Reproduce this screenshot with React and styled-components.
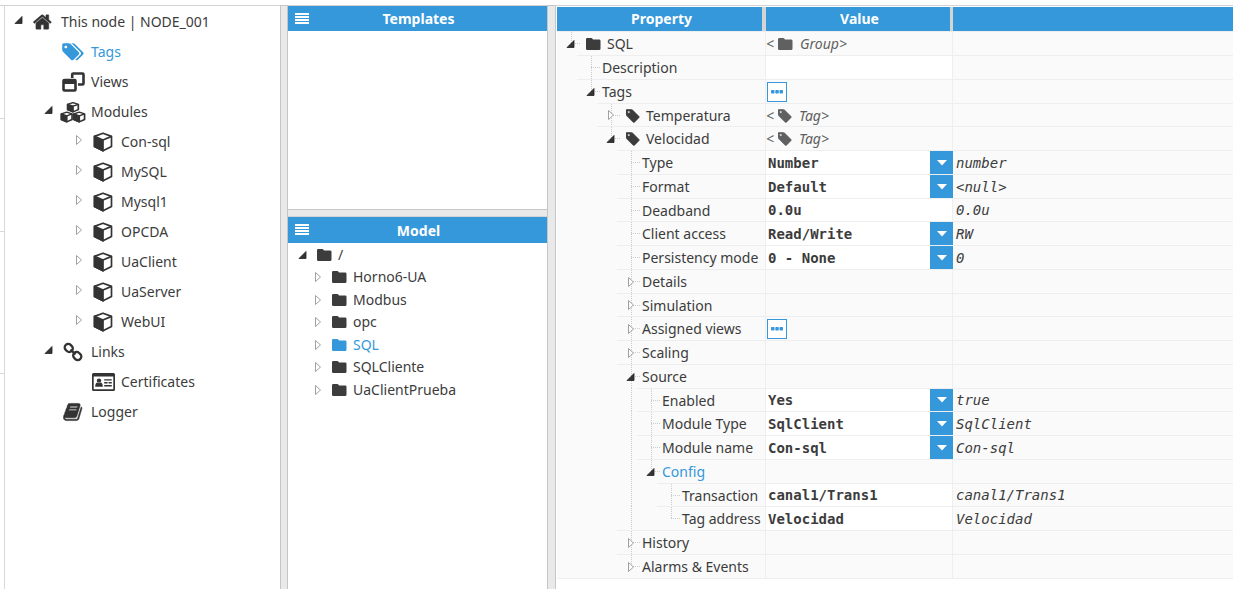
import React from "react";
import styled, { createGlobalStyle, css } from "styled-components";

const BLUE = "#3598db";
const ICON = "#333333";
const INK = "#3c3c3c";
const LINE = "#eeeeee";
const UI = `"Noto Sans", "Open Sans", sans-serif`;
const MONO = `"DejaVu Sans Mono", "Liberation Mono", monospace`;

const GlobalStyle = createGlobalStyle`
  *, *::before, *::after { box-sizing: border-box; }
  body {
    margin: 0;
    background: #ffffff;
    color: ${INK};
    font: 14px/20px ${UI};
  }
  button, input, select { font: inherit; color: inherit; }
`;

/* ---------- page frame ---------- */

const Workspace = styled.div`
  min-height: 100vh;
  padding-top: 5px;
  display: flex;
`;

const Panel = styled.div`
  border-top: 1px solid #d2d2d2;
  min-width: 0;
`;

const Strip = styled(Panel)`
  flex: none;
  width: 5px;
  border-right: 1px solid #d8d8d8;
`;

const StripPart = styled.div`
  height: ${(p) => p.$h}px;
  border-bottom: 1px solid #d8d8d8;
`;

const NavPanel = styled(Panel)`
  flex: none;
  width: 275px;
  padding-top: 1px;
`;

const MiddlePanel = styled(Panel)`
  flex: none;
  width: 259px;
  display: flex;
  flex-direction: column;
`;

const PropertyPanel = styled(Panel)`
  flex: 1;
  padding: 1px 0 0 1px;
`;

const Splitter = styled.div`
  flex: none;
  background: #e9e9e9;
  ${(p) =>
    p.$horizontal
      ? css`
          height: 8px;
          border-top: 1px solid #c6c6c6;
          border-bottom: 1px solid #d4d4d4;
        `
      : css`
          width: ${p.$w}px;
          border: solid #c6c6c6;
          border-width: 1px 1px 0;
        `}
`;

const PaneHeader = styled.header`
  display: grid;
  grid-template-columns: 28px 1fr 26px;
  align-items: center;
  height: ${(p) => p.$h}px;
  background: ${BLUE};
  color: #ffffff;
`;

const PaneTitle = styled.h2`
  margin: 0;
  padding-top: 1px;
  text-align: center;
  font-size: 14px;
  line-height: 20px;
  font-weight: 700;
`;

const MenuButton = styled.button`
  display: flex;
  justify-content: center;
  padding: 0;
  border: 0;
  background: none;
`;

const TemplatesBody = styled.div`
  height: 178px;
`;

/* ---------- icons ---------- */

const Svg = styled.svg`
  display: block;
  flex: none;
`;

const FA = {
  home: "M1472 992v480q0 26-19 45t-45 19h-384v-384h-256v384h-384q-26 0-45-19t-19-45v-480q0-1 .5-3t.5-3l575-474 575 474q1 2 1 6zm223-69l-62 74q-8 9-21 11h-3q-13 0-21-7l-692-577-692 577q-12 8-24 7-13-2-21-11l-62-74q-8-10-7-23.500t11-21.500l719-599q32-26 76-26t76 26l244 204v-195q0-14 9-23t23-9h192q14 0 23 9t9 23v408l219 182q10 8 11 21.500t-7 23.500z",
  tag: "M448 448q0-53-37.500-90.500t-90.500-37.500-90.500 37.500-37.500 90.500 37.500 90.500 90.500 37.500 90.500-37.500 37.500-90.500zm1067 576q0 53-37 90l-491 492q-39 37-91 37-53 0-90-37l-715-716q-38-37-64.500-101t-26.500-117v-416q0-52 38-90t90-38h416q53 0 117 26.500t102 64.500l715 714q37 39 37 91z",
  tagBack:
    "M1899 1024q0 53-37 90l-491 492q-39 37-91 37-36 0-59-14t-53-45l470-470q37-37 37-90 0-52-37-91l-715-714q-38-38-102-64.500t-117-26.500h224q53 0 117 26.500t102 64.500l715 714q37 39 37 91z",
  book: "M1703 478q40 57 18 129l-275 906q-19 64-76.500 107.500t-122.500 43.500h-923q-77 0-148.500-53.500t-99.500-131.500q-24-67-2-127 0-4 3-27t4-37q1-8-3-21.500t-3-19.500q2-11 8-21t16.500-23.500 16.500-23.500q23-38 45-91.500t30-91.500q3-10 .5-30t-.5-28q3-11 17-28t17-23q21-36 42-92t25-90q1-9-2.500-32t.5-28q4-13 22-30.500t22-22.500q19-26 42.500-84.500t27.500-96.500q1-8-3-25.500t-2-26.500q2-8 9-18t18-23 17-21q8-12 16.500-30.500t15-35 16-36 19.500-32 26.500-23.500 36-11.500 47.500 5.500l-1 3q38-9 51-9h761q74 0 114 56t18 130l-274 906q-36 119-71.500 153.500t-128.500 34.500h-869q-27 0-38 15-11 16-1 43 24 70 144 70h923q29 0 56-15.500t35-41.500l300-987q7-22 5-57 38 15 59 43zm-1064 2q-4 13 2 22.500t20 9.500h608q13 0 25.500-9.500t16.500-22.500l21-64q4-13-2-22.500t-20-9.500h-608q-13 0-25.500 9.500t-16.500 22.500zm-83 256q-4 13 2 22.500t20 9.500h608q13 0 25.500-9.500t16.500-22.500l21-64q4-13-2-22.500t-20-9.500h-608q-13 0-25.500 9.500t-16.500 22.500z",
};

const HomeIcon = () => (
  <Svg width="20" height="20" viewBox="60 0 1792 1792" fill="currentColor" aria-hidden="true">
    <path d={FA.home} stroke="currentColor" strokeWidth="40" />
  </Svg>
);

const TagsIcon = () => (
  <Svg width="22" height="18" viewBox="0 100 1920 1600" fill="currentColor" aria-hidden="true">
    <path d={FA.tag} />
    <path d={FA.tagBack} />
  </Svg>
);

const TagIcon = () => (
  <Svg width="14" height="14" viewBox="0 100 1600 1600" fill="currentColor" aria-hidden="true">
    <path d={FA.tag} stroke="currentColor" strokeWidth="50" />
  </Svg>
);

const BookIcon = () => (
  <Svg width="20" height="20" viewBox="30 0 1792 1792" fill="currentColor" aria-hidden="true">
    <path d={FA.book} stroke="currentColor" strokeWidth="50" />
  </Svg>
);

const FolderIcon = () => (
  <Svg width="15" height="12" viewBox="0 0 15 12" fill="currentColor" aria-hidden="true">
    <path d="M0 1.200Q0 0 1.200 0H5.200q.9 0 1.300.7l.5.8h6.200q1.300 0 1.300 1.300v7.700Q14.500 12 13.200 12H1.200Q0 12 0 10.700z" />
  </Svg>
);

const ViewsIcon = () => (
  <Svg width="23" height="20" viewBox="0 0 23 20" fill="none" stroke="currentColor" strokeWidth="2.600" aria-hidden="true">
    <path d="M10.200 6V2.500Q10.200 1.500 11.200 1.500h9.300Q21.500 1.500 21.500 2.500v9Q21.500 12.500 20.500 12.500H16" />
    <rect x="1.500" y="8" width="12" height="10.500" rx="1" />
    <path d="M1 9.700h13" strokeWidth="4.600" />
  </Svg>
);

const CubeShape = () => (
  <>
    <path d="M10 1.200 18.500 4.400V14.500L10 18.800 1.500 14.500V4.400z" />
    <path d="M1.500 4.400 10 8V18.800L1.500 14.500z" fill="currentColor" />
    <path d="M10 8 18.500 4.400" />
  </>
);

const CubeIcon = () => (
  <Svg width="20" height="20" viewBox="0 0 20 20" fill="none" stroke="currentColor" strokeWidth="1.700" strokeLinejoin="round" aria-hidden="true">
    <CubeShape />
  </Svg>
);

const CubesIcon = () => (
  <Svg width="26" height="21" viewBox="0 0 52 42" fill="none" stroke="currentColor" strokeWidth="2.700" strokeLinejoin="round" aria-hidden="true">
    <g transform="translate(13.500 0) scale(1.250 1.050)"><CubeShape /></g>
    <g transform="translate(1 19) scale(1.250 1.100)"><CubeShape /></g>
    <g transform="translate(26 19) scale(1.250 1.100)"><CubeShape /></g>
  </Svg>
);

const LinksIcon = () => (
  <Svg width="20" height="20" viewBox="0 0 20 20" fill="none" stroke="currentColor" strokeWidth="2.300" aria-hidden="true">
    <rect x="1.500" y="2.500" width="8.500" height="7" rx="3.400" transform="rotate(45 5.800 6)" />
    <rect x="10" y="10.500" width="8.500" height="7" rx="3.400" transform="rotate(45 14.200 14)" />
    <path d="M7.500 7.500 12.500 12.500" />
  </Svg>
);

const CardIcon = () => (
  <Svg width="23" height="18" viewBox="0 0 23 18" fill="currentColor" aria-hidden="true">
    <path fillRule="evenodd" d="M1.500 0h20Q23 0 23 1.500v15q0 1.500-1.500 1.500h-20Q0 18 0 16.500v-15Q0 0 1.500 0zM1.700 3.500v12.800h19.600v-12.800z" />
    <circle cx="7" cy="7.600" r="2.200" />
    <path d="M3.200 13.700q0-3.900 2.300-4.100 1.500 1.100 3 0 2.300.2 2.300 4.100z" />
    <path d="M12.200 6.200h7.600v1.400h-7.600zM12.200 9h3.400v1.400h-3.400zM16.600 9h3.200v1.400h-3.200zM12.200 12h7.600v1.400h-7.600z" />
  </Svg>
);

const MenuIcon = () => (
  <Svg width="14" height="12" viewBox="0 0 14 12" fill="currentColor" aria-hidden="true">
    <path d="M0 0h14v2H0zM0 3h14v2H0zM0 6h14v2H0zM0 9h14v2H0z" />
  </Svg>
);

const DotsIcon = () => (
  <Svg width="12" height="4" viewBox="0 0 12 4" fill="currentColor" aria-hidden="true">
    <rect x="0" y="0" width="3.500" height="3.500" rx=".8" />
    <rect x="4.300" y="0" width="3.500" height="3.500" rx=".8" />
    <rect x="8.500" y="0" width="3.500" height="3.500" rx=".8" />
  </Svg>
);

const ExpanderButton = styled.button`
  display: flex;
  justify-content: center;
  align-items: center;
  flex: none;
  width: 12px;
  height: 12px;
  padding: 0;
  border: 0;
  background: none;
`;

function Expander({ open, name }) {
  return (
    <ExpanderButton type="button" aria-expanded={open} aria-label={name}>
      <Svg width="10" height="12" viewBox="0 0 10 12" aria-hidden="true">
        {open ? (
          <path d="M8 2.500V9.500H1z" fill="#333333" stroke="#222222" strokeWidth=".8" />
        ) : (
          <path d="M2.500 1.500 7.500 6 2.500 10.500z" fill="#ffffff" stroke="#a0a0a0" />
        )}
      </Svg>
    </ExpanderButton>
  );
}

/* ---------- trees ---------- */

const TreeList = styled.ul`
  margin: 0;
  padding: 0;
  list-style: none;
`;

const TreeLink = styled.a`
  display: flex;
  align-items: center;
  color: ${(p) => (p.$active ? BLUE : INK)};
  text-decoration: none;
  white-space: nowrap;
`;

const NavRow = styled.li`
  display: flex;
  align-items: center;
  height: 30px;
  padding-left: ${(p) => 8 + p.$level * 30}px;
`;

const NavToggle = styled.span`
  display: block;
  width: 17px;
  height: 16px;
`;

const NavIcon = styled.span`
  display: flex;
  justify-content: center;
  width: 26px;
  margin-right: 5px;
  color: ${(p) => (p.$active ? BLUE : ICON)};
`;

const ModelRow = styled.li`
  display: flex;
  align-items: center;
  height: 22px;
  padding-left: ${(p) => 9 + p.$level * 15}px;
  &:nth-child(odd) {
    height: 23px;
  }
`;

const ModelIcon = styled.span`
  margin: 0 6px 0 8px;
`;

const NAV = [
  [0, "This node | NODE_001", HomeIcon, true],
  [1, "Tags", TagsIcon, null, true],
  [1, "Views", ViewsIcon],
  [1, "Modules", CubesIcon, true],
  [2, "Con-sql", CubeIcon, false],
  [2, "MySQL", CubeIcon, false],
  [2, "Mysql1", CubeIcon, false],
  [2, "OPCDA", CubeIcon, false],
  [2, "UaClient", CubeIcon, false],
  [2, "UaServer", CubeIcon, false],
  [2, "WebUI", CubeIcon, false],
  [1, "Links", LinksIcon, true],
  [2, "Certificates", CardIcon],
  [1, "Logger", BookIcon],
];

const MODEL = [
  [0, "/", true],
  [1, "Horno6-UA", false],
  [1, "Modbus", false],
  [1, "opc", false],
  [1, "SQL", false, true],
  [1, "SQLCliente", false],
  [1, "UaClientPrueba", false],
];

/* ---------- property table ---------- */

const Table = styled.table`
  width: 100%;
  table-layout: fixed;
  border-collapse: separate;
  border-spacing: 0;
  background: #fafafa;
  border-bottom: 1px solid ${LINE};
`;

const HeadCell = styled.th`
  height: 24px;
  padding: 0;
  background: linear-gradient(
    to left,
    #d4d4d4 ${(p) => p.$gap || 0}px,
    ${BLUE} ${(p) => p.$gap || 0}px
  );
  color: #ffffff;
  font-weight: 700;
  line-height: 20px;
`;

const Row = styled.tr`
  height: 24px;
  &:nth-child(4n) {
    height: 23px;
  }
`;

const NameCell = styled.th`
  height: inherit;
  padding: 0;
  border-right: 1px solid ${LINE};
  font-weight: 400;
  text-align: left;
`;

const NameLine = styled.div`
  display: flex;
  height: 100%;
`;

const Guide = styled.span`
  flex: none;
  width: 20px;
  ${(p) =>
    p.$on &&
    css`
      background: repeating-linear-gradient(#cccccc 0 1px, transparent 1px 2px) 14px 0 / 1px 100% no-repeat;
    `}
`;

const Branch = styled.span`
  flex: none;
  display: flex;
  align-items: center;
  width: 25px;
  padding-left: 8px;
  border-top: 1px solid ${LINE};
  background:
    repeating-linear-gradient(#cccccc 0 1px, transparent 1px 2px) 14px 0 / 1px ${(p) => (p.$last ? "50%" : "100%")} no-repeat,
    repeating-linear-gradient(90deg, #cccccc 0 1px, transparent 1px 2px) 14px 50% / 9px 1px no-repeat;
`;

const Name = styled.span`
  flex: 1;
  display: flex;
  align-items: center;
  gap: ${(p) => (p.$icon ? 6 : 0)}px;
  padding: 1px 0 0 ${(p) => (p.$icon ? 4 : 0)}px;
  border-top: 1px solid ${LINE};
  color: ${(p) => (p.$active ? BLUE : INK)};
  line-height: 20px;
  white-space: nowrap;
`;

const ValueCell = styled.td`
  height: inherit;
  padding: 0;
  border-top: 1px solid ${LINE};
  border-right: ${(p) => (p.$flush ? 0 : 1)}px solid ${LINE};
  background: ${(p) => (p.$editable ? "#ffffff" : "transparent")};
`;

const RawCell = styled.td`
  padding: 0 3px;
  border-top: 1px solid ${LINE};
  font: italic 14px/20px ${MONO};
  white-space: nowrap;
`;

const Kind = styled.span`
  display: flex;
  align-items: center;
  gap: 4px;
  padding-top: 1px;
  color: #606060;
  font-style: italic;
  line-height: 20px;
`;

const KindName = styled.span`
  padding-left: 3px;
`;

const TextInput = styled.input`
  display: block;
  width: 100%;
  height: 22px;
  padding: 0 2px;
  border: 0;
  background: transparent;
  font: 700 14px/20px ${MONO};
`;

const SelectBox = styled.label`
  display: grid;
  grid-template-columns: 1fr 23px;
  height: 100%;
`;

const Select = styled.select`
  grid-area: 1 / 1 / 2 / 3;
  width: 100%;
  padding: 0 24px 0 2px;
  appearance: none;
  border: 0;
  border-radius: 0;
  background: transparent;
  font: 700 14px/20px ${MONO};
`;

const SelectArrow = styled.span`
  grid-area: 1 / 2 / 2 / 3;
  display: flex;
  align-items: center;
  justify-content: center;
  background: ${BLUE};
  color: #ffffff;
  pointer-events: none;
`;

const MoreButton = styled.button`
  display: flex;
  align-items: center;
  justify-content: center;
  width: 20px;
  height: 20px;
  margin-left: 1px;
  padding: 0;
  border: 1px solid ${BLUE};
  background: #ffffff;
  color: ${BLUE};
`;

const PROPS = [
  { level: 0, name: "SQL", Icon: FolderIcon, open: true, last: true, kind: "Group" },
  { level: 1, name: "Description", input: "" },
  { level: 1, name: "Tags", open: true, last: true, more: true },
  { level: 2, name: "Temperatura", Icon: TagIcon, open: false, kind: "Tag" },
  { level: 2, name: "Velocidad", Icon: TagIcon, open: true, last: true, kind: "Tag" },
  { level: 3, name: "Type", select: "Number", raw: "number" },
  { level: 3, name: "Format", select: "Default", raw: "<null>" },
  { level: 3, name: "Deadband", input: "0.0u", raw: "0.0u" },
  { level: 3, name: "Client access", select: "Read/Write", raw: "RW" },
  { level: 3, name: "Persistency mode", select: "0 - None", raw: "0" },
  { level: 3, name: "Details", open: false },
  { level: 3, name: "Simulation", open: false },
  { level: 3, name: "Assigned views", open: false, more: true },
  { level: 3, name: "Scaling", open: false },
  { level: 3, name: "Source", open: true },
  { level: 4, name: "Enabled", select: "Yes", raw: "true" },
  { level: 4, name: "Module Type", select: "SqlClient", raw: "SqlClient" },
  { level: 4, name: "Module name", select: "Con-sql", raw: "Con-sql" },
  { level: 4, name: "Config", open: true, last: true, active: true },
  { level: 5, name: "Transaction", input: "canal1/Trans1", raw: "canal1/Trans1" },
  { level: 5, name: "Tag address", input: "Velocidad", raw: "Velocidad", last: true },
  { level: 3, name: "History", open: false },
  { level: 3, name: "Alarms & Events", open: false, last: true },
];

function Value({ row }) {
  if (row.kind) {
    return (
      <Kind>
        &lt; {row.kind === "Group" ? <FolderIcon /> : <TagIcon />}
        <KindName>{row.kind}&gt;</KindName>
      </Kind>
    );
  }
  if (row.more) {
    return (
      <MoreButton type="button" aria-label={`Edit ${row.name}`}>
        <DotsIcon />
      </MoreButton>
    );
  }
  if (row.select) {
    return (
      <SelectBox>
        <Select aria-label={row.name} defaultValue={row.select}>
          <option>{row.select}</option>
        </Select>
        <SelectArrow>
          <Svg width="10" height="6" viewBox="0 0 10 6" fill="currentColor" aria-hidden="true">
            <path d="M0 0h10L5 5.500z" />
          </Svg>
        </SelectArrow>
      </SelectBox>
    );
  }
  if (row.input !== undefined) {
    return <TextInput type="text" aria-label={row.name} defaultValue={row.input} />;
  }
  return null;
}

function PropertyRow({ row }) {
  const { level, name, Icon, open, last, active } = row;
  return (
    <Row>
      <NameCell scope="row">
        <NameLine>
          {Array.from({ length: level }, (_, i) => (
            <Guide key={i} $on={i === 3 && level > 3} />
          ))}
          <Branch $last={last}>
            {open !== undefined && <Expander open={open} name={`Toggle ${name}`} />}
          </Branch>
          <Name $icon={Boolean(Icon)} $active={active}>
            {Icon && <Icon />}
            {name}
          </Name>
        </NameLine>
      </NameCell>
      <ValueCell $editable={Boolean(row.select) || row.input !== undefined} $flush={Boolean(row.select)}>
        <Value row={row} />
      </ValueCell>
      <RawCell>{row.raw}</RawCell>
    </Row>
  );
}

export default function App() {
  return (
    <>
      <GlobalStyle />
      <Workspace>
        <Strip>
          <StripPart $h={113} />
          <StripPart $h={113} />
          <StripPart $h={142} />
        </Strip>

        <NavPanel as="nav" aria-label="Node">
          <TreeList>
            {NAV.map(([level, label, Icon, open, active]) => (
              <NavRow key={label} $level={level}>
                <NavToggle>
                  {typeof open === "boolean" && <Expander open={open} name={`Toggle ${label}`} />}
                </NavToggle>
                <TreeLink href="#" $active={active}>
                  <NavIcon $active={active}>
                    <Icon />
                  </NavIcon>
                  {label}
                </TreeLink>
              </NavRow>
            ))}
          </TreeList>
        </NavPanel>

        <Splitter $w={8} />

        <MiddlePanel>
          <PaneHeader $h={25}>
            <MenuButton type="button" aria-label="Templates menu">
              <MenuIcon />
            </MenuButton>
            <PaneTitle>Templates</PaneTitle>
          </PaneHeader>
          <TemplatesBody />
          <Splitter $horizontal />
          <PaneHeader $h={26}>
            <MenuButton type="button" aria-label="Model menu">
              <MenuIcon />
            </MenuButton>
            <PaneTitle>Model</PaneTitle>
          </PaneHeader>
          <TreeList>
            {MODEL.map(([level, label, open, active]) => (
              <ModelRow key={label} $level={level}>
                <Expander open={open} name={`Toggle ${label}`} />
                <TreeLink href="#" $active={active}>
                  <ModelIcon>
                    <FolderIcon />
                  </ModelIcon>
                  {label}
                </TreeLink>
              </ModelRow>
            ))}
          </TreeList>
        </MiddlePanel>

        <Splitter $w={9} />

        <PropertyPanel>
          <Table>
            <colgroup>
              <col width="209" />
              <col width="187" />
              <col />
            </colgroup>
            <thead>
              <tr>
                <HeadCell scope="col" $gap={4}>Property</HeadCell>
                <HeadCell scope="col" $gap={3}>Value</HeadCell>
                <HeadCell scope="col" aria-label="Raw value" />
              </tr>
            </thead>
            <tbody>
              {PROPS.map((row) => (
                <PropertyRow key={`${row.level}-${row.name}`} row={row} />
              ))}
            </tbody>
          </Table>
        </PropertyPanel>
      </Workspace>
    </>
  );
}
